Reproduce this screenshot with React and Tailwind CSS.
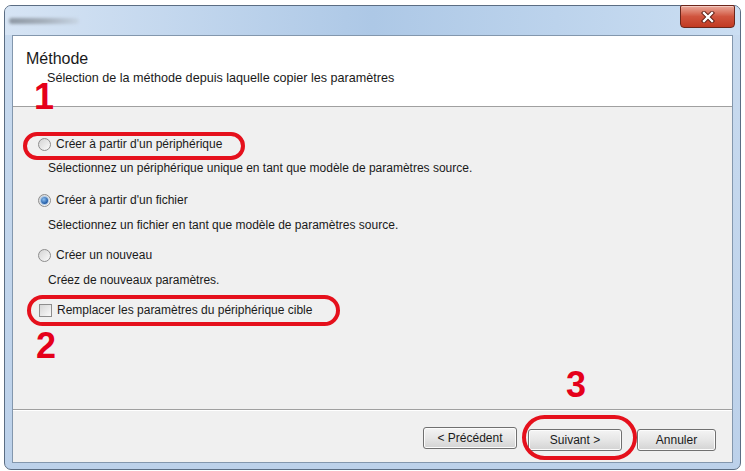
import React, { useState } from "react";

const font = { fontFamily: '"Liberation Sans", Arial, sans-serif' };

const Radio = ({ checked, label, onClick }) => (
  <button type="button" onClick={onClick} className="flex items-center h-4 text-left">
    <span className="w-[13px] h-[13px] rounded-full border border-[#8d8d8d] bg-linear-to-br from-[#d4d4d4] to-[#fbfbfb] flex items-center justify-center">
      {checked && (
        <span className="w-[7px] h-[7px] rounded-full bg-[radial-gradient(circle_at_40%_35%,#8cc0f0,#1f5aa6_70%)] shadow-[0_0_0_1px_#a9c8e8]" />
      )}
    </span>
    <span className="ml-[5px] text-[12px] leading-4 text-[#1a1a1a]">{label}</span>
  </button>
);

const WinButton = ({ children, w }) => (
  <button
    type="button"
    className={`${w} h-[22px] rounded-[3px] border border-[#707070] bg-linear-to-b from-[#f4f4f4] via-[#e6e6e6] to-[#d3d3d3] text-[12px] text-[#1a1a1a] shadow-[inset_0_0_0_1px_#fcfcfc]`}
  >
    {children}
  </button>
);

const App = () => {
  const [mode, setMode] = useState("file");
  const [replace, setReplace] = useState(false);

  return (
    <div className="relative w-[745px] h-[471px] bg-white overflow-hidden" style={font}>
      {/* window */}
      <div className="absolute left-[4px] top-[5px] w-[737px] h-[465px] rounded-[7px] border border-[#5b6d83] bg-linear-to-b from-[#c9dbef] to-[#bcd1ea] flex flex-col">
        {/* title bar */}
        <div className="relative h-[29px] rounded-t-[6px] bg-linear-to-r from-[#d6e4f4] via-[#adc8e6] to-[#cbdef2] flex items-center">
          <div className="ml-[4px] w-[70px] h-[6px] rounded-full bg-linear-to-r from-[#7c8590] via-[#9aa3ad] to-[#c6d3e2] blur-[1.5px] opacity-80" />
          <div className="absolute right-[5px] -top-[1px] w-[55px] h-[23px] rounded-b-[4px] rounded-t-[2px] border border-[#6b261b] bg-linear-to-b from-[#e9a99b] via-[#d0543e] to-[#c13a22] flex items-center justify-center shadow-[inset_0_1px_0_#f5c9bf]">
            <svg width="14" height="12" viewBox="0 0 14 12">
              <path d="M3 2 L11 10 M11 2 L3 10" stroke="#5a1a10" strokeWidth="4.2" strokeLinecap="square" />
              <path d="M3 2 L11 10 M11 2 L3 10" stroke="#ffffff" strokeWidth="2.4" strokeLinecap="square" />
            </svg>
          </div>
        </div>

        {/* client area */}
        <div className="mx-[7px] mb-[6px] flex-1 border border-[#8397ad] bg-[#f0f0f0] flex flex-col">
          {/* header */}
          <div className="h-[71px] bg-white border-b border-[#a0a0a0] pl-[13px] pt-[13px]">
            <div className="text-[16px] leading-5 text-[#1a1a1a]">Méthode</div>
            <div className="ml-[21px] mt-[1px] text-[12.6px] leading-4 text-[#1a1a1a]">
              Sélection de la méthode depuis laquelle copier les paramètres
            </div>
          </div>

          {/* body */}
          <div className="flex-1 pl-[25px] pt-[29px] flex flex-col">
            <Radio checked={mode === "device"} onClick={() => setMode("device")} label="Créer à partir d'un périphérique" />
            <div className="ml-[10px] mt-[8px] text-[12px] leading-4 text-[#1a1a1a]">
              Sélectionnez un périphérique unique en tant que modèle de paramètres source.
            </div>
            <div className="mt-[16px]">
              <Radio checked={mode === "file"} onClick={() => setMode("file")} label="Créer à partir d'un fichier" />
            </div>
            <div className="ml-[10px] mt-[9px] text-[12px] leading-4 text-[#1a1a1a]">
              Sélectionnez un fichier en tant que modèle de paramètres source.
            </div>
            <div className="mt-[14px]">
              <Radio checked={mode === "new"} onClick={() => setMode("new")} label="Créer un nouveau" />
            </div>
            <div className="ml-[10px] mt-[9px] text-[12px] leading-4 text-[#1a1a1a]">
              Créez de nouveaux paramètres.
            </div>
            <button type="button" onClick={() => setReplace(!replace)} className="mt-[14px] ml-[1px] flex items-center h-4 text-left">
              <span className="w-[13px] h-[13px] border border-[#8d8d8d] bg-linear-to-br from-[#d6d6d6] to-[#fafafa] flex items-center justify-center text-[10px] leading-none text-[#1f4f8f]">
                {replace ? "✓" : ""}
              </span>
              <span className="ml-[5px] text-[12px] leading-4 text-[#1a1a1a]">Remplacer les paramètres du périphérique cible</span>
            </button>
          </div>

          {/* footer */}
          <div className="h-[53px] border-t border-[#a0a0a0] shadow-[inset_0_1px_0_#ffffff] flex justify-end items-start pt-[17px] pr-[16px]">
            <WinButton w="w-[94px]">&lt; Précédent</WinButton>
            <div className="ml-[11px]">
              <WinButton w="w-[94px]">Suivant &gt;</WinButton>
            </div>
            <div className="ml-[15px]">
              <WinButton w="w-[79px]">Annuler</WinButton>
            </div>
          </div>
        </div>
      </div>

      {/* callouts */}
      <div className="absolute left-[23px] top-[132px] w-[222px] h-[28px] rounded-full border-[4px] border-[#e5101c]" />
      <div className="absolute left-[27px] top-[295px] w-[313px] h-[31px] rounded-full border-[4px] border-[#e5101c]" />
      <div className="absolute left-[522px] top-[415px] w-[115px] h-[45px] rounded-full border-[4px] border-[#e5101c]" />

      <div className="absolute left-[34px] top-[79px] text-[36px] leading-none font-bold text-[#e5001a]">1</div>
      <div className="absolute left-[36px] top-[328px] text-[36px] leading-none font-bold text-[#e5001a]">2</div>
      <div className="absolute left-[566px] top-[367px] text-[36px] leading-none font-bold text-[#e5001a]">3</div>
    </div>
  );
};

export default App;
